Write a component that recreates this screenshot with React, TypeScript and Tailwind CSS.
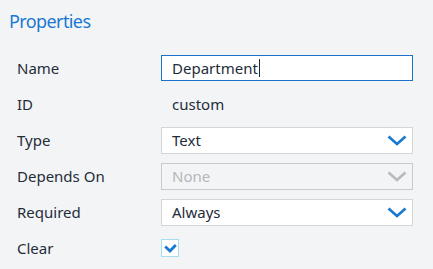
import React from "react";

function Chevron({ color }: { color: string }) {
  return (
    <svg width="20" height="11" viewBox="0 0 20 11" className="shrink-0">
      <path d="M1.5 1.5 L10 9 L18.5 1.5" fill="none" stroke={color} strokeWidth="2.6" />
    </svg>
  );
}

function Row({ label, children }: { label: string; children: React.ReactNode }) {
  return (
    <div className="flex h-[36px] items-center">
      <div className="w-[144px] text-[15px] text-[#1f2d3a]">{label}</div>
      <div className="flex-1">{children}</div>
    </div>
  );
}

function Select({ value, disabled }: { value: string; disabled?: boolean }) {
  return (
    <div
      className={
        disabled
          ? "flex h-[27px] items-center justify-between border border-[#c8cbce] bg-[#f3f4f6] pl-[10px] pr-[5px] text-[15px] text-[#b3b7bb]"
          : "flex h-[27px] items-center justify-between border border-[#d3d6d9] bg-white pl-[10px] pr-[5px] text-[15px] text-[#1f2d3a]"
      }
    >
      <span>{value}</span>
      <Chevron color={disabled ? "#b7babd" : "#1a78d2"} />
    </div>
  );
}

export default function App() {
  return (
    <div
      className="h-[269px] w-[433px] bg-[#f3f4f6] pl-[17px] pr-[20px]"
      style={{ fontFamily: '"Noto Sans", "Open Sans", sans-serif' }}
    >
      <div className="-ml-[8px] h-[50px] pt-[8px] text-[18px] tracking-[-0.6px] text-[#1a78d2]">Properties</div>
      <Row label="Name">
        <div className="flex h-[26px] items-center border border-[#1a73c9] bg-white pl-[10px] text-[15px] text-[#1f2d3a]">
          <span>Department</span>
          <span className="ml-px h-[18px] w-px bg-[#1f2d3a]" />
        </div>
      </Row>
      <Row label="ID">
        <div className="pl-[11px] text-[15px] text-[#1f2d3a]">custom</div>
      </Row>
      <Row label="Type">
        <Select value="Text" />
      </Row>
      <Row label="Depends On">
        <Select value="None" disabled />
      </Row>
      <Row label="Required">
        <Select value="Always" />
      </Row>
      <Row label="Clear">
        <div className="flex h-[18px] w-[18px] items-center justify-center border border-[#a6def0] bg-white">
          <svg width="13" height="10" viewBox="0 0 13 10">
            <path d="M1.2 3.5 L6 8 L11.8 2" fill="none" stroke="#1a78d2" strokeWidth="2.8" />
          </svg>
        </div>
      </Row>
    </div>
  );
}
